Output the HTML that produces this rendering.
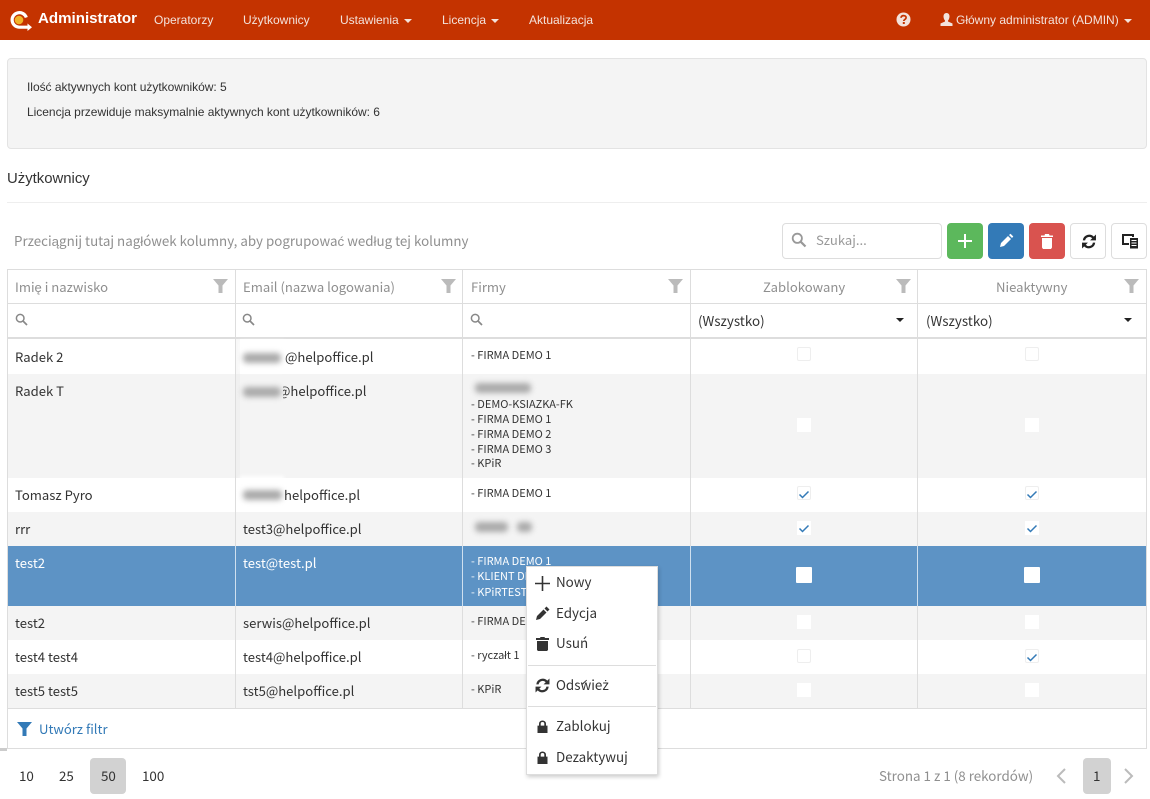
<!DOCTYPE html>
<html>
<head>
<meta charset="utf-8">
<title>Administrator</title>
<style>
html,body{margin:0;padding:0;background:#fff}
body{width:1150px;height:799px;position:relative;overflow:hidden;font-family:"Liberation Sans",sans-serif;color:#333}
.a{position:absolute;white-space:nowrap}
.nav{top:13px;font-size:12px;line-height:14px;color:#f3e3dc}
.caret{position:absolute;width:0;height:0;border-left:4px solid transparent;border-right:4px solid transparent;border-top:4px solid #f3e3dc}
.seg{font-family:"Noto Sans CJK JP","Liberation Sans",sans-serif;font-size:13.1px;line-height:18px;color:#333}
.lg{font-size:13.4px}
.hd{color:#8f8f8f;top:278px}
.lat{font-family:"Liberation Sans",sans-serif}
.small{font-family:"Noto Sans CJK JP","Liberation Sans",sans-serif;font-size:11px;line-height:15px;color:#333}
.r{position:absolute;left:8px;width:1138px}
.v{position:absolute;width:1px;background:#ddd}
.h{position:absolute;height:1px;background:#ddd}
.cb{position:absolute;width:12px;height:12px;background:#fff;border:1px solid #eee;border-radius:2px}
.cg{position:absolute;width:14px;height:14px;background:#fff}
.btn{position:absolute;top:223px;width:36px;height:36px;border-radius:4px;box-sizing:border-box}
.blur{position:absolute;background:#aaa;filter:blur(3px);border-radius:4px}
.wblur{position:absolute;background:#fff;filter:blur(2px)}
svg{position:absolute;display:block}
.mi{font-family:"Noto Sans CJK JP","Liberation Sans",sans-serif;font-size:13.4px;line-height:18px;color:#333;left:556px}
</style>
</head>
<body>
<!-- navbar -->
<div class="a" style="left:0;top:0;width:1150px;height:40px;background:#c43300"></div>
<svg style="left:9px;top:9px" width="24" height="24" viewBox="0 0 24 24"><path d="M17.300 8.500A7.300 7.300 0 1 0 10 18.200H19" fill="none" stroke="#fff" stroke-width="3.200"/><circle cx="10" cy="11" r="4.300" fill="#f0b429"/><path d="M18.500 14.500L23 18.300 18.500 22z" fill="#fff"/></svg>
<div class="a" style="left:38px;top:10px;font-size:15.100px;line-height:18px;font-weight:bold;color:#fff">Administrator</div>
<div class="a nav" style="left:154px">Operatorzy</div>
<div class="a nav" style="left:243px">Użytkownicy</div>
<div class="a nav" style="left:340px">Ustawienia</div><div class="caret" style="left:404px;top:19px"></div>
<div class="a nav" style="left:442px">Licencja</div><div class="caret" style="left:491px;top:19px"></div>
<div class="a nav" style="left:529px">Aktualizacja</div>
<svg style="left:896px;top:12px" width="15" height="15" viewBox="0 0 15 15"><circle cx="7.500" cy="7.500" r="7" fill="#f3e3dc"/><path d="M5 5.800c.2-1.500 1.200-2.200 2.600-2.200 1.500 0 2.500.9 2.500 2 0 1.900-2.300 1.700-2.300 3.400" fill="none" stroke="#c43300" stroke-width="1.700"/><rect x="6.800" y="10" width="2" height="2" fill="#c43300"/></svg>
<svg style="left:940px;top:13px" width="13" height="13" viewBox="0 0 13 13"><path d="M6.500 0C8.500 0 9.500 1.500 9.500 3.500S8.500 7 8 7.500v1l4.500 2V13H.5v-2.500L5 8.500v-1C4.500 7 3.500 5.500 3.500 3.500S4.500 0 6.500 0z" fill="#f3e3dc"/></svg>
<div class="a nav" style="left:956px">Główny administrator (ADMIN)</div><div class="caret" style="left:1124px;top:19px"></div>

<!-- info panel -->
<div class="a" style="left:7px;top:58px;width:1138px;height:89px;background:#f4f4f4;border:1px solid #e3e3e3;border-radius:4px"></div>
<div class="a" style="left:27px;top:80px;font-size:12px;line-height:14px;color:#333;letter-spacing:-.03px">Ilość aktywnych kont użytkowników: 5</div>
<div class="a" style="left:27px;top:105px;font-size:12px;line-height:14px;color:#333;letter-spacing:-.02px">Licencja przewiduje maksymalnie aktywnych kont użytkowników: 6</div>

<div class="a" style="left:7px;top:171px;font-size:14.900px;line-height:16px;color:#333">Użytkownicy</div>
<div class="h" style="left:7px;top:202px;width:1140px;background:#eee"></div>

<!-- toolbar -->
<div class="a seg" style="left:14px;top:232px;color:#8f8f8f;font-size:13.350px">Przeciągnij tutaj nagłówek kolumny, aby pogrupowa<span class="lat">ć</span> według tej kolumny</div>
<div class="a" style="left:782px;top:223px;width:158px;height:34px;border:1px solid #ddd;border-radius:4px"></div>
<svg style="left:791px;top:232px" width="16" height="16" viewBox="0 0 16 16"><circle cx="6.300" cy="6.300" r="4.600" fill="none" stroke="#999" stroke-width="1.800"/><path d="M9.800 9.800l4.700 4.700" stroke="#999" stroke-width="2.200"/></svg>
<div class="a seg" style="left:816px;top:231px;color:#999">Szukaj...</div>
<div class="btn" style="left:947px;background:#5cb85c"></div>
<svg style="left:957px;top:233px" width="16" height="16" viewBox="0 0 16 16"><path d="M7 1h2v6h6v2H9v6H7V9H1V7h6z" fill="#fff"/></svg>
<div class="btn" style="left:988px;background:#337ab7"></div>
<svg style="left:999px;top:233px" width="15" height="15" viewBox="0 0 15 15"><path d="M1 14l1-4 7-7 3 3-7 7zM10 2l1.500-1.300 2.800 2.800L13 5z" fill="#fff"/></svg>
<div class="btn" style="left:1029px;background:#d9534f"></div>
<svg style="left:1040px;top:234px" width="14" height="15" viewBox="0 0 14 15"><path d="M5 0h4l.5 1.500H13V3H1V1.500h3.500zM2 4h10v9.500l-1 1.500H3l-1-1.500z" fill="#fff"/></svg>
<div class="btn" style="left:1070px;background:#fff;border:1px solid #ddd"></div>
<svg style="left:1081px;top:234px" width="16" height="15" viewBox="1 1 14 14"><path d="M2.200 7A6 6 0 0 1 12.500 3.500L14.500 1.500V7H9l2-2A3.800 3.800 0 0 0 4.400 7zM13.800 9A6 6 0 0 1 3.500 12.500L1.500 14.500V9H7l-2 2a3.800 3.800 0 0 0 6.600-2z" fill="#222"/></svg>
<div class="btn" style="left:1111px;background:#fff;border:1px solid #ddd"></div>
<svg style="left:1121px;top:234px" width="18" height="15" viewBox="0 0 18 15"><path d="M1 0h12v3h-2V2H3v7h5v2H1z" fill="#222"/><path d="M9 4h8v10.500H9z" fill="#222"/><path d="M10.500 6.500h5M10.500 9h5M10.500 11.500h5" stroke="#fff" stroke-width="1"/></svg>

<!-- table rows -->
<div class="r" style="top:339px;height:35px;background:#fff"></div>
<div class="r" style="top:374px;height:104px;background:#f4f4f4"></div>
<div class="r" style="top:478px;height:34px;background:#fff"></div>
<div class="r" style="top:512px;height:34px;background:#f4f4f4"></div>
<div class="r" style="top:546px;height:60px;background:#5d93c5"></div>
<div class="r" style="top:606px;height:34px;background:#f4f4f4"></div>
<div class="r" style="top:640px;height:34px;background:#fff"></div>
<div class="r" style="top:674px;height:34px;background:#f4f4f4"></div>

<!-- grid lines -->
<div class="h" style="left:7px;top:269px;width:1140px"></div>
<div class="h" style="left:7px;top:303px;width:1140px"></div>
<div class="h" style="left:7px;top:337px;width:1140px;height:2px"></div>
<div class="h" style="left:7px;top:708px;width:1140px"></div>
<div class="h" style="left:7px;top:748px;width:1140px"></div>
<div class="a" style="left:0;top:748px;width:7px;height:3px;background:#ccc"></div>
<div class="v" style="left:7px;top:269px;height:480px"></div>
<div class="v" style="left:1146px;top:269px;height:480px"></div>
<div class="v" style="left:235px;top:269px;height:439px"></div>
<div class="v" style="left:462px;top:269px;height:439px"></div>
<div class="v" style="left:690px;top:269px;height:439px"></div>
<div class="v" style="left:917px;top:269px;height:439px"></div>
<div class="v" style="left:235px;top:546px;height:60px;background:#cfe0ef"></div>
<div class="v" style="left:462px;top:546px;height:60px;background:#cfe0ef"></div>
<div class="v" style="left:690px;top:546px;height:60px;background:#cfe0ef"></div>
<div class="v" style="left:917px;top:546px;height:60px;background:#cfe0ef"></div>

<!-- header -->
<div class="a seg hd" style="left:15px">Imię i nazwisko</div>
<div class="a seg hd" style="left:243px">Email (nazwa logowania)</div>
<div class="a seg hd" style="left:471px">Firmy</div>
<div class="a seg hd" style="left:763px">Zablokowany</div>
<div class="a seg hd" style="left:996px">Nieaktywny</div>
<svg style="left:213px;top:279px" width="15" height="14" viewBox="0 0 15 14"><path d="M0 0h15L9.500 6.500V14h-4V6.500z" fill="#bbb"/></svg>
<svg style="left:441px;top:279px" width="15" height="14" viewBox="0 0 15 14"><path d="M0 0h15L9.500 6.500V14h-4V6.500z" fill="#bbb"/></svg>
<svg style="left:668px;top:279px" width="15" height="14" viewBox="0 0 15 14"><path d="M0 0h15L9.500 6.500V14h-4V6.500z" fill="#bbb"/></svg>
<svg style="left:896px;top:279px" width="15" height="14" viewBox="0 0 15 14"><path d="M0 0h15L9.500 6.500V14h-4V6.500z" fill="#bbb"/></svg>
<svg style="left:1124px;top:279px" width="15" height="14" viewBox="0 0 15 14"><path d="M0 0h15L9.500 6.500V14h-4V6.500z" fill="#bbb"/></svg>

<!-- filter row -->
<svg style="left:15px;top:313px" width="13" height="13" viewBox="0 0 13 13"><circle cx="5.200" cy="5.200" r="3.800" fill="none" stroke="#888" stroke-width="1.500"/><path d="M8 8l4 4" stroke="#888" stroke-width="1.700"/></svg>
<svg style="left:242px;top:313px" width="13" height="13" viewBox="0 0 13 13"><circle cx="5.200" cy="5.200" r="3.800" fill="none" stroke="#888" stroke-width="1.500"/><path d="M8 8l4 4" stroke="#888" stroke-width="1.700"/></svg>
<svg style="left:470px;top:313px" width="13" height="13" viewBox="0 0 13 13"><circle cx="5.200" cy="5.200" r="3.800" fill="none" stroke="#888" stroke-width="1.500"/><path d="M8 8l4 4" stroke="#888" stroke-width="1.700"/></svg>
<div class="a seg lg" style="left:698px;top:311px">(Wszystko)</div>
<div class="a seg lg" style="left:926px;top:311px">(Wszystko)</div>
<div class="caret" style="left:896px;top:318px;border-top-color:#222"></div>
<div class="caret" style="left:1124px;top:318px;border-top-color:#222"></div>

<!-- col 1 -->
<div class="a seg" style="left:15px;top:348px">Radek 2</div>
<div class="a seg" style="left:15px;top:382px">Radek T</div>
<div class="a seg" style="left:15px;top:486px">Tomasz Pyro</div>
<div class="a seg" style="left:15px;top:520px">rrr</div>
<div class="a seg" style="left:15px;top:554px;color:#fff">test2</div>
<div class="a seg" style="left:15px;top:614px">test2</div>
<div class="a seg" style="left:15px;top:648px">test4 test4</div>
<div class="a seg" style="left:15px;top:682px">test5 test5</div>

<!-- col 2 -->
<div class="a" style="left:236px;top:374px;width:4px;height:104px;background:#f0f0f0"></div>
<div class="a" style="left:236px;top:339px;width:4px;height:35px;background:#f8f8f8"></div>
<div class="wblur" style="left:240px;top:341px;width:44px;height:31px"></div>
<div class="blur" style="left:243px;top:353px;width:38px;height:10px"></div>
<div class="a seg" style="left:285px;top:348px">@helpoffice.pl</div>
<div class="a seg" style="left:278px;top:382px">@helpoffice.pl</div>
<div class="a" style="left:272px;top:383px;width:11px;height:18px;background:#f4f4f4"></div>
<div class="blur" style="left:243px;top:387px;width:38px;height:10px"></div>
<div class="wblur" style="left:240px;top:476px;width:44px;height:28px"></div>
<div class="blur" style="left:243px;top:490px;width:39px;height:10px"></div>
<div class="a seg" style="left:284px;top:486px">helpoffice.pl</div>
<div class="a seg" style="left:243px;top:520px">test3@helpoffice.pl</div>
<div class="a seg" style="left:243px;top:554px;color:#fff">test@test.pl</div>
<div class="a seg" style="left:243px;top:614px">serwis@helpoffice.pl</div>
<div class="a seg" style="left:243px;top:648px">test4@helpoffice.pl</div>
<div class="a seg" style="left:243px;top:682px">tst5@helpoffice.pl</div>

<!-- col 3 -->
<div class="a small" style="left:471px;top:348px">- FIRMA DEMO 1</div>
<div class="blur" style="left:475px;top:383px;width:56px;height:10px"></div>
<div class="a small" style="left:471px;top:397px">- DEMO-KSIAZKA-FK</div>
<div class="a small" style="left:471px;top:412px">- FIRMA DEMO 1</div>
<div class="a small" style="left:471px;top:427px">- FIRMA DEMO 2</div>
<div class="a small" style="left:471px;top:442px">- FIRMA DEMO 3</div>
<div class="a small" style="left:471px;top:456px">- KPiR</div>
<div class="a small" style="left:471px;top:486px">- FIRMA DEMO 1</div>
<div class="blur" style="left:475px;top:522px;width:33px;height:10px"></div>
<div class="blur" style="left:517px;top:522px;width:15px;height:10px"></div>
<div class="a small" style="left:471px;top:554px;color:#fff">- FIRMA DEMO 1</div>
<div class="a small" style="left:471px;top:569px;color:#fff">- KLIENT DEMO</div>
<div class="a small" style="left:471px;top:585px;color:#fff">- KPiRTESTY</div>
<div class="a small" style="left:471px;top:614px">- FIRMA DEMO 1</div>
<div class="a small" style="left:471px;top:648px">- ryczałt 1</div>
<div class="a small" style="left:471px;top:682px">- KPiR</div>

<!-- checkboxes -->
<div class="cb" style="left:797px;top:347px"></div><div class="cb" style="left:1025px;top:347px"></div>
<div class="cg" style="left:797px;top:418px"></div><div class="cg" style="left:1025px;top:418px"></div>
<div class="cb" style="left:797px;top:486px"></div><div class="cb" style="left:1025px;top:486px"></div>
<div class="cg" style="left:797px;top:521px"></div><div class="cg" style="left:1025px;top:521px"></div>
<div class="a" style="left:796px;top:567px;width:16px;height:16px;background:#fff;border-radius:1px"></div>
<div class="a" style="left:1024px;top:567px;width:16px;height:16px;background:#fff;border-radius:1px"></div>
<div class="cg" style="left:797px;top:615px"></div><div class="cg" style="left:1025px;top:615px"></div>
<div class="cb" style="left:797px;top:649px"></div><div class="cb" style="left:1025px;top:649px"></div>
<div class="cg" style="left:797px;top:683px"></div><div class="cg" style="left:1025px;top:683px"></div>
<svg style="left:797px;top:487px" width="14" height="14" viewBox="0 0 14 14"><path d="M2.500 7.500l3 3 6-6" fill="none" stroke="#337ab7" stroke-width="1.500"/></svg>
<svg style="left:1025px;top:487px" width="14" height="14" viewBox="0 0 14 14"><path d="M2.500 7.500l3 3 6-6" fill="none" stroke="#337ab7" stroke-width="1.500"/></svg>
<svg style="left:797px;top:521px" width="14" height="14" viewBox="0 0 14 14"><path d="M2.500 7.500l3 3 6-6" fill="none" stroke="#337ab7" stroke-width="1.500"/></svg>
<svg style="left:1025px;top:521px" width="14" height="14" viewBox="0 0 14 14"><path d="M2.500 7.500l3 3 6-6" fill="none" stroke="#337ab7" stroke-width="1.500"/></svg>
<svg style="left:1025px;top:650px" width="14" height="14" viewBox="0 0 14 14"><path d="M2.500 7.500l3 3 6-6" fill="none" stroke="#337ab7" stroke-width="1.500"/></svg>

<!-- create filter -->
<svg style="left:17px;top:722px" width="15" height="14" viewBox="0 0 15 14"><path d="M0 0h15L9.500 6.500V14h-4V6.500z" fill="#337ab7"/></svg>
<div class="a seg" style="left:39px;top:720px;color:#337ab7">Utwórz filtr</div>

<!-- pager -->
<div class="a" style="left:90px;top:758px;width:36px;height:36px;background:#d2d2d2;border-radius:4px"></div>
<div class="a seg lg" style="left:19px;top:766px">10</div>
<div class="a seg lg" style="left:59px;top:766px">25</div>
<div class="a seg lg" style="left:101px;top:766px">50</div>
<div class="a seg lg" style="left:142px;top:766px">100</div>
<div class="a seg lg" style="left:879px;top:766px;color:#8f8f8f">Strona 1 z 1 (8 rekordów)</div>
<svg style="left:1055px;top:768px" width="12" height="16" viewBox="0 0 12 16"><path d="M10 1L3 8l7 7" fill="none" stroke="#bbb" stroke-width="2"/></svg>
<div class="a" style="left:1083px;top:758px;width:28px;height:36px;background:#d2d2d2;border-radius:4px"></div>
<div class="a seg lg" style="left:1093px;top:766px">1</div>
<svg style="left:1123px;top:768px" width="12" height="16" viewBox="0 0 12 16"><path d="M2 1l7 7-7 7" fill="none" stroke="#bbb" stroke-width="2"/></svg>

<!-- context menu -->
<div class="a" style="left:526px;top:566px;width:132px;height:209px;background:#fff;border:1px solid #ddd;box-sizing:border-box;box-shadow:1px 2px 4px rgba(0,0,0,.2)"></div>
<svg style="left:535px;top:576px" width="15" height="15" viewBox="0 0 15 15"><path d="M6.700 0h1.600v6.700H15v1.600H8.300V15H6.700V8.300H0V6.700h6.700z" fill="#333"/></svg>
<div class="a mi" style="top:572px">Nowy</div>
<svg style="left:536px;top:606px" width="14" height="14" viewBox="0 0 14 14"><path d="M0 14l1-4 6.500-6.500 3 3L4 13zM8.500 2.500L10.500.5l3 3-2 2z" fill="#333"/></svg>
<div class="a mi" style="top:603px">Edycja</div>
<svg style="left:536px;top:637px" width="13" height="14" viewBox="0 0 13 14"><path d="M4.500 0h4l.5 1H13v2H0V1h4zM1 4h11v9l-1 1H2l-1-1z" fill="#333"/></svg>
<div class="a mi" style="top:633px">Usuń</div>
<div class="h" style="left:528px;top:665px;width:128px"></div>
<svg style="left:535px;top:678px" width="15" height="15" viewBox="1 1 14 14"><path d="M2.200 7A6 6 0 0 1 12.500 3.500L14.500 1.500V7H9l2-2A3.800 3.800 0 0 0 4.400 7zM13.800 9A6 6 0 0 1 3.500 12.500L1.500 14.500V9H7l-2 2a3.800 3.800 0 0 0 6.600-2z" fill="#333"/></svg>
<div class="a mi" style="top:675px">Odświe<span class="lat">ż</span></div>
<div class="h" style="left:528px;top:706px;width:128px"></div>
<svg style="left:537px;top:720px" width="11" height="13" viewBox="0 0 11 14" preserveAspectRatio="none"><path d="M2 6V4a3.500 3.500 0 0 1 7 0v2h1.500v8H.5V6zM3.700 6h3.600V4a1.800 1.800 0 0 0-3.600 0z" fill="#333"/></svg>
<div class="a mi" style="top:716px">Zablokuj</div>
<svg style="left:537px;top:751px" width="11" height="13" viewBox="0 0 11 14" preserveAspectRatio="none"><path d="M2 6V4a3.500 3.500 0 0 1 7 0v2h1.500v8H.5V6zM3.700 6h3.600V4a1.800 1.800 0 0 0-3.600 0z" fill="#333"/></svg>
<div class="a mi" style="top:747px">Dezaktywuj</div>
</body>
</html>
